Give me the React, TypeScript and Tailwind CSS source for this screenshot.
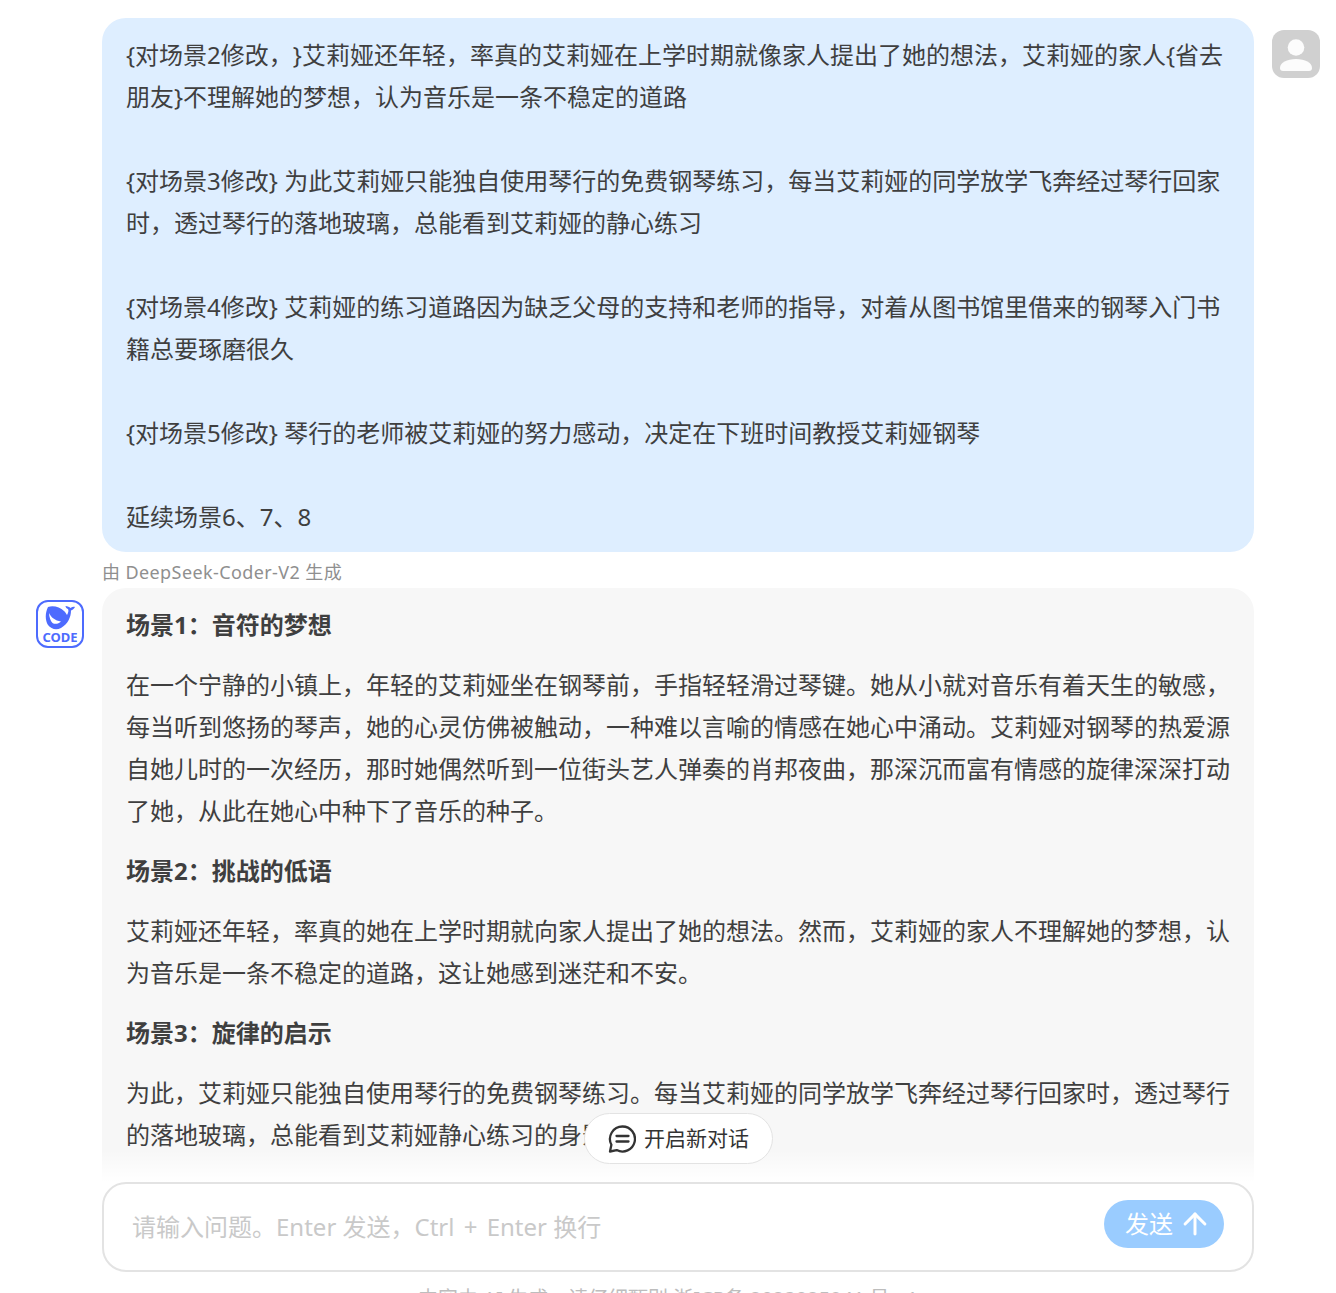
import { ArrowUp } from "lucide-react";

const USER_PARAS = [
  "{对场景2修改，}艾莉娅还年轻，率真的艾莉娅在上学时期就像家人提出了她的想法，艾莉娅的家人{省去朋友}不理解她的梦想，认为音乐是一条不稳定的道路",
  "{对场景3修改} 为此艾莉娅只能独自使用琴行的免费钢琴练习，每当艾莉娅的同学放学飞奔经过琴行回家时，透过琴行的落地玻璃，总能看到艾莉娅的静心练习",
  "{对场景4修改} 艾莉娅的练习道路因为缺乏父母的支持和老师的指导，对着从图书馆里借来的钢琴入门书籍总要琢磨很久",
  "{对场景5修改} 琴行的老师被艾莉娅的努力感动，决定在下班时间教授艾莉娅钢琴",
  "延续场景6、7、8",
];

const SCENES = [
  {
    title: "场景1：音符的梦想",
    body: "在一个宁静的小镇上，年轻的艾莉娅坐在钢琴前，手指轻轻滑过琴键。她从小就对音乐有着天生的敏感，每当听到悠扬的琴声，她的心灵仿佛被触动，一种难以言喻的情感在她心中涌动。艾莉娅对钢琴的热爱源自她儿时的一次经历，那时她偶然听到一位街头艺人弹奏的肖邦夜曲，那深沉而富有情感的旋律深深打动了她，从此在她心中种下了音乐的种子。",
  },
  {
    title: "场景2：挑战的低语",
    body: "艾莉娅还年轻，率真的她在上学时期就向家人提出了她的想法。然而，艾莉娅的家人不理解她的梦想，认为音乐是一条不稳定的道路，这让她感到迷茫和不安。",
  },
  {
    title: "场景3：旋律的启示",
    body: "为此，艾莉娅只能独自使用琴行的免费钢琴练习。每当艾莉娅的同学放学飞奔经过琴行回家时，透过琴行的落地玻璃，总能看到艾莉娅静心练习的身影。",
  },
];

function UserAvatar() {
  return (
    <div className="w-12 h-12 rounded-xl bg-[#d0d0d0] shrink-0 overflow-hidden">
      <svg viewBox="0 0 48 48" className="w-12 h-12" fill="#fcfcfc">
        <circle cx="24" cy="17.500" r="8.300" />
        <path d="M8 38c0-5.500 7-9 16-9s16 3.500 16 9c0 2-1 3-3 3H11c-2 0-3-1-3-3z" />
      </svg>
    </div>
  );
}

function CoderLogo() {
  return (
    <div className="w-12 h-12 rounded-xl border-2 border-[#4d6bfe] bg-white shrink-0 flex flex-col items-center">
      <svg viewBox="0 0 30 25" className="w-[30px] h-[25px] mt-[3px] shrink-0">
        <path fill="#4d6bfe" d="M3 2C8 0 15 2 19 6c1.500 1.500 2.500 3 3 4 1-2 2-4 1-6-1.500-.5-2.500-2-2.500-3 2 0 4 1 5 2 1.500-1 3-1.500 4.500-1-1 2-2.500 3-4 3.500 0 6.500-3 13.500-10 17.500-5 2.500-10 1-13-3C0 15 0 8 3 2z" />
        <path fill="#ffffff" d="M4 8c2 4.500 6 7.500 12 8.500-2.500 2.500-6 3-8.500 1.500C5.500 16 4.200 12 4 8z" />
      </svg>
      <span className="text-[13px] leading-[12px] mt-[1px] font-bold text-[#4d6bfe]">CODE</span>
    </div>
  );
}

function ChatIcon() {
  return (
    <svg viewBox="0 0 28 28" className="w-7 h-7 shrink-0" fill="none" stroke="#333" strokeWidth="2.300" strokeLinecap="round" strokeLinejoin="round">
      <path d="M14.500 1.500a12.500 12.500 0 1 1-5.800 23.600L2 26.500l1.400-6.700A12.500 12.500 0 0 1 14.500 1.500z" />
      <path d="M8.500 11h12M8.500 16.500h12" />
    </svg>
  );
}

export default function App() {
  return (
    <div className="h-[1293px] overflow-hidden bg-white flex flex-col font-['Noto_Sans','Noto_Sans_CJK_SC',sans-serif] text-[24px] leading-[42px] text-[#3f3f3f] [text-spacing-trim:space-all]">
      <div className="relative h-[1182px] shrink-0 overflow-hidden">
        <div className="flex gap-[18px] pl-[102px] pr-4 pt-[18px]">
          <div className="w-[1152px] rounded-3xl bg-[#deeeff] px-6 pt-4 pb-[14px]">
            {USER_PARAS.map((p, i) => (
              <p key={i} className={i > 0 ? "mt-[42px]" : ""}>{p}</p>
            ))}
          </div>
          <div className="pt-3"><UserAvatar /></div>
        </div>

        <p className="pl-[102px] mt-[6px] text-[18px] leading-[28px] tracking-[0.4px] text-[#8f8f8f]">由 DeepSeek-Coder-V2 生成</p>

        <div className="flex gap-[18px] pl-9 mt-[2px]">
          <div className="pt-3"><CoderLogo /></div>
          <div className="w-[1152px] rounded-t-3xl bg-[#f7f7f7] px-6 pt-4 pb-24">
            {SCENES.map((s, i) => (
              <div key={i} className={i > 0 ? "mt-[18px]" : ""}>
                <h3 className="font-bold">{s.title}</h3>
                <p className="mt-[18px]">{s.body}</p>
              </div>
            ))}
          </div>
        </div>

        {/* fade above the input */}
        <div className="absolute left-[102px] bottom-0 w-[1152px] h-[32px] bg-gradient-to-b from-[#f7f7f7]/0 to-white" />

        <button className="absolute left-[584px] top-[1113px] h-[51px] w-[189px] rounded-full border border-[#e3e3e3] bg-white flex items-center justify-center gap-2 text-[21px] leading-7 text-[#333]">
          <ChatIcon />
          <span className="-mt-[2px]">开启新对话</span>
        </button>
      </div>

      <div className="ml-[102px] w-[1152px] h-[90px] shrink-0 rounded-3xl border-2 border-[#e3e3e3] bg-white flex items-center justify-between pl-[28px] pr-[28px]">
        <span className="text-[#c9c9c9]">请输入问题。Enter 发送，Ctrl <span className="mx-[3px]">+</span> Enter 换行</span>
        <button className="w-[120px] h-12 -mt-[6px] rounded-full bg-[#9accff] text-white flex items-center pl-[21px] gap-[5px]">
          <span>发送</span>
          <ArrowUp size={34} strokeWidth={2.100} />
        </button>
      </div>

      <p className="mt-[13px] text-center text-[20px] leading-7 text-[#bdbdbd]">内容由 AI 生成，请仔细甄别 浙ICP备 2023025841 号 - 1</p>
    </div>
  );
}
